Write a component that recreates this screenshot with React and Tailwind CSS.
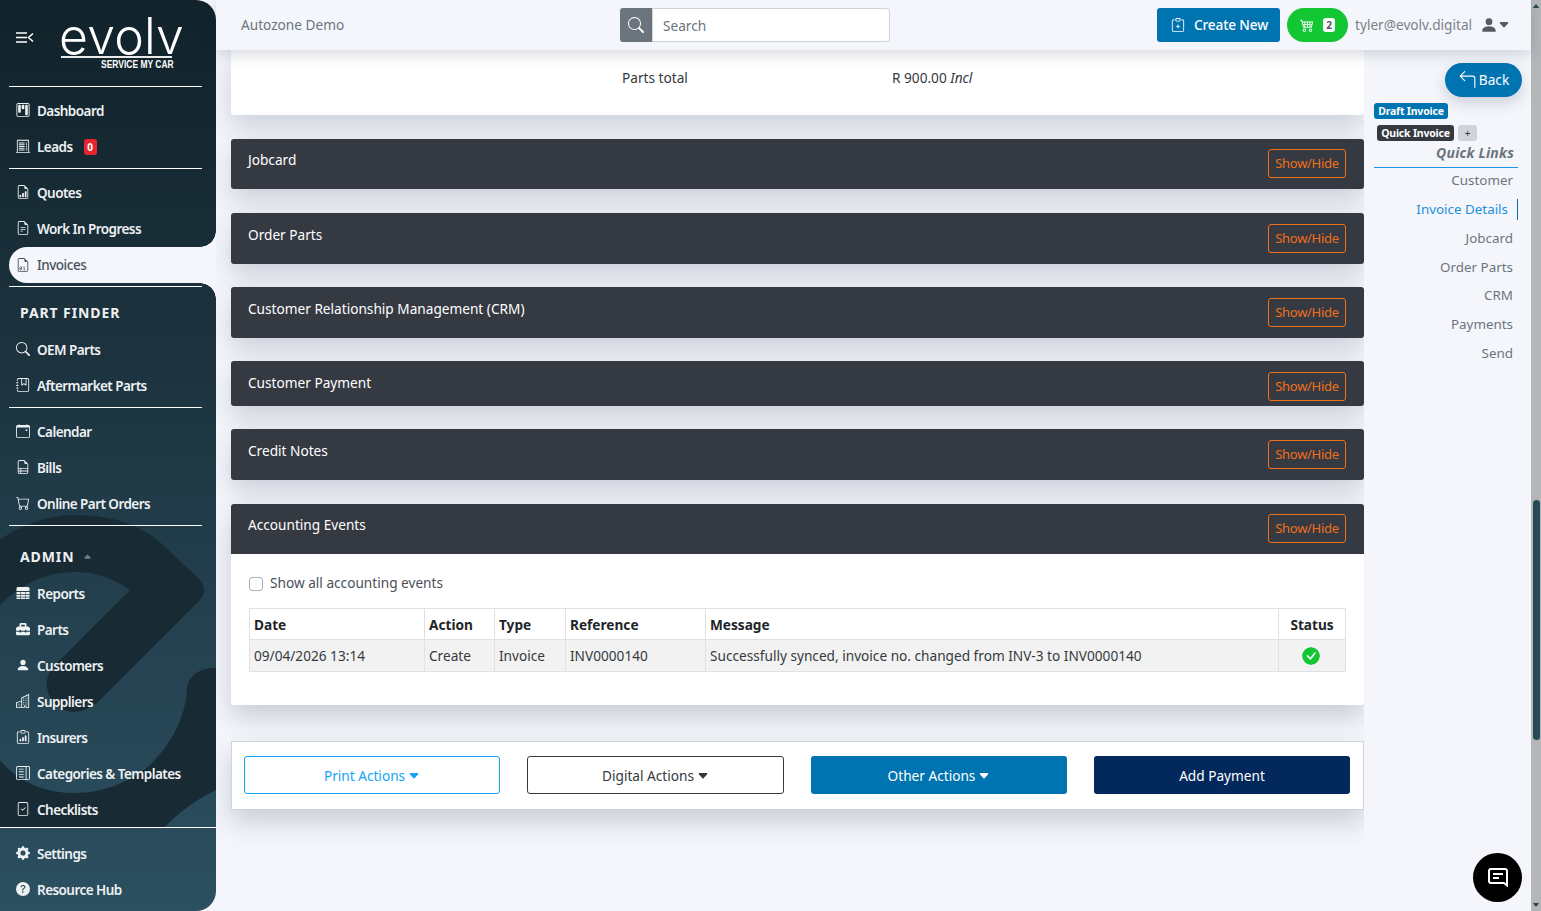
import {
  BsKanban, BsReceiptCutoff, BsFileEarmarkBarGraph, BsFileEarmarkText, BsFileEarmarkBinary, BsSearch,
  BsJournalBookmark, BsCalendarEvent, BsFileEarmarkRuled, BsCart, BsPersonFill, BsBuildings,
  BsClipboardData, BsLayoutTextSidebar, BsFileCheck, BsGearFill, BsQuestionCircleFill, BsClipboardPlus,
  BsCart4, BsArrow90DegLeft, BsCheckCircleFill, BsCaretDownFill, BsCaretUpFill,
} from 'react-icons/bs';
import { FaToolbox } from 'react-icons/fa';

const font = "font-['Noto_Sans',sans-serif]";

const ReportsIcon = ({ className }) => (
  <svg className={className} viewBox="0 0 14 14" fill="currentColor">
    <path d="M2 1h10a1.5 1.5 0 0 1 1.5 1.5V5H.5V2.500A1.500 1.500 0 0 1 2 1z" />
    <path d="M.5 6h4v2h-4zM5 6h4v2H5zM9.500 6h4v2h-4zM.5 8.800h4v2h-4zM5 8.800h4v2H5zM9.500 8.800h4v2h-4zM.5 11.500h4V13H.5zM5 11.500h4V13H5zM9.500 11.500h4V13h-4z" />
  </svg>
);

function NavItem({ icon: Icon, label, badge, active }) {
  if (active) {
    return (
      <div className="relative ml-[9px] flex h-9 items-center rounded-l-full bg-[#f4f6fb] pl-[7px] text-[#4b5259]">
        {/* inverted corners against the dark panel */}
        <span className="absolute -top-4 right-0 h-4 w-4 bg-[radial-gradient(circle_at_0_0,transparent_15.5px,#f4f6fb_16px)]" />
        <span className="absolute -bottom-4 right-0 h-4 w-4 bg-[radial-gradient(circle_at_0_100%,transparent_15.5px,#f4f6fb_16px)]" />
        <Icon className="h-[14px] w-[14px]" />
        <span className="ml-[7px] text-[13.5px] font-medium tracking-[-0.5px]">{label}</span>
      </div>
    );
  }
  return (
    <div className="flex h-9 items-center pl-4 text-[#eef1f3]">
      <Icon className="h-[14px] w-[14px] -translate-y-[1px]" />
      <span className="ml-[7px] text-[13.5px] font-semibold tracking-[-0.55px]">{label}</span>
      {badge && (
        <span className="ml-[11px] flex h-4 w-[13px] items-center justify-center rounded-[3px] bg-[#e8252f] text-[10px] font-bold text-white">
          {badge}
        </span>
      )}
    </div>
  );
}

const Rule = ({ className }) => <div className={`ml-[9px] w-[193px] border-t border-white ${className}`} />;

function Sidebar() {
  return (
    <aside className="relative h-[911px] w-[216px] shrink-0 overflow-hidden rounded-r-[20px] bg-[linear-gradient(180deg,#11222a_0%,#1b313c_35%,#2c5061_100%)]">
      <svg className="absolute left-0 top-0" width="216" height="911" viewBox="0 0 216 911" fill="#182a33">
        <path d="M0 540 C26 522 52 515 75 515 C115 515 145 527 165 547 L200 580 Q208 590 200 600 L100 700 C84 716 60 716 50 697 C43 682 48 670 60 660 L130 590 C110 576 92 572 75 572 C45 572 20 585 0 605 Z" />
        <path d="M0 760 C20 785 50 793 75 793 C105 793 133 780 150 765 C175 740 185 715 187 690 C188 675 200 668 216 668 L216 790 C195 800 178 813 165 827 L0 827 Z" />
      </svg>

      <div className="relative">
        <div className="h-[86px] pt-[29px]">
          <div className="flex items-start">
            <svg className="ml-4 mt-[3px]" width="18" height="11" viewBox="0 0 18 11" fill="none" stroke="#fff" strokeWidth="1.5">
              <path d="M0 1h11M0 5.5h11M0 10h11M17 1.5l-4.5 4 4.5 4" />
            </svg>
            <div className="ml-[27px] w-[121px]">
              <div className="relative h-[27px]">
                <span className="absolute -top-[12px] left-[-2px] font-['Inter',sans-serif] text-[50px] font-[350] leading-[39px] tracking-[0.2px] text-white">evolv</span>
              </div>
              <div className="w-[111px] border-t-2 border-white/90" />
              <div className="ml-[40px] w-[100px] origin-left scale-x-[0.77] whitespace-nowrap font-['Liberation_Sans',sans-serif] text-[11px] font-bold leading-[12px] text-white">SERVICE MY CAR</div>
            </div>
          </div>
        </div>
        <Rule className="mb-[6px]" />
        <NavItem icon={BsKanban} label="Dashboard" />
        <NavItem icon={BsReceiptCutoff} label="Leads" badge="0" />
        <Rule className="mb-[6px] mt-[3px]" />
        <NavItem icon={BsFileEarmarkBarGraph} label="Quotes" />
        <NavItem icon={BsFileEarmarkText} label="Work In Progress" />
        <NavItem icon={BsFileEarmarkBinary} label="Invoices" active />
        <Rule className="mt-[3px]" />
        <div className="flex h-[45px] items-center pl-5 pt-[6px] text-[14px] font-bold tracking-[0.9px] text-[#eef1f3]">PART FINDER</div>
        <NavItem icon={BsSearch} label="OEM Parts" />
        <NavItem icon={BsJournalBookmark} label="Aftermarket Parts" />
        <Rule className="mb-[6px] mt-[3px]" />
        <NavItem icon={BsCalendarEvent} label="Calendar" />
        <NavItem icon={BsFileEarmarkRuled} label="Bills" />
        <NavItem icon={BsCart} label="Online Part Orders" />
        <Rule className="mt-[3px]" />
        <div className="flex h-[50px] items-center pl-5 pt-[11px] text-[14px] font-bold tracking-[0.9px] text-[#eef1f3]">
          ADMIN
          <BsCaretUpFill className="ml-[9px] h-[9px] w-[9px] text-[#6d7f88]" />
        </div>
        <NavItem icon={ReportsIcon} label="Reports" />
        <NavItem icon={FaToolbox} label="Parts" />
        <NavItem icon={BsPersonFill} label="Customers" />
        <NavItem icon={BsBuildings} label="Suppliers" />
        <NavItem icon={BsClipboardData} label="Insurers" />
        <NavItem icon={BsLayoutTextSidebar} label="Categories & Templates" />
        <NavItem icon={BsFileCheck} label="Checklists" />
        <div className="mb-[8px] mt-[-1px] border-t border-white" />
        <NavItem icon={BsGearFill} label="Settings" />
        <NavItem icon={BsQuestionCircleFill} label="Resource Hub" />
      </div>
    </aside>
  );
}

function TopBar() {
  return (
    <header className="flex h-[50px] items-center bg-[#f4f6fb] pl-[25px] text-[13.65px]">
      <span className="w-[379px] shrink-0 text-[#6c757d]">Autozone Demo</span>
      <div className="flex h-[34px] w-[270px] shrink-0">
        <span className="flex w-8 items-center justify-center rounded-l-[3px] bg-[#6c757d]">
          <BsSearch className="h-4 w-4 text-white" />
        </span>
        <div className="flex flex-1 items-center rounded-r-[3px] border border-[#ced4da] bg-white pl-[10px] pt-[2px] text-[#6c757d]">Search</div>
      </div>
      <button className="ml-[267px] flex h-[34px] w-[123px] shrink-0 items-center rounded-[3px] bg-[#0073b1] pl-[14px] font-medium tracking-[-0.15px] text-white">
        <BsClipboardPlus className="mr-[9px] h-[14px] w-[14px]" />
        Create New
      </button>
      <div className="ml-[7px] flex h-[34px] w-[61px] shrink-0 items-center justify-center gap-[9px] rounded-full bg-[#12c634]">
        <BsCart4 className="h-[14px] w-[14px] text-white" />
        <span className="flex h-[14px] w-3 items-center justify-center rounded-[3px] bg-white text-[10px] font-bold text-[#555]">2</span>
      </div>
      <span className="ml-[7px] shrink-0 text-[#7b8289]">tyler@evolv.digital</span>
      <BsPersonFill className="ml-[8px] h-[18px] w-[18px] shrink-0 text-[#555b61]" />
      <BsCaretDownFill className="h-[12px] w-[12px] shrink-0 text-[#555b61]" />
    </header>
  );
}

function ShowHide({ className }) {
  return (
    <button className={`${className} flex h-[29px] w-[78px] items-center justify-center rounded-[3px] border border-[#f0701a] text-[13px] tracking-[-0.3px] text-[#f0701a]`}>Show/Hide</button>
  );
}

function Section({ title, height, gap, btn, label }) {
  return (
    <div className={`${height} ${gap} flex items-start justify-between rounded-[3px] bg-[#343942] pl-[17px] pr-[18px] shadow-[0_12px_26px_rgba(30,40,70,0.18)]`}>
      <span className={`${label} text-[13.65px] leading-[21px] text-white`}>{title}</span>
      <ShowHide className={btn} />
    </div>
  );
}

const sections = [
  { title: 'Jobcard', height: 'h-[50px]', gap: 'mb-[24px]', btn: 'mt-[10px]', label: 'mt-[10px]' },
  { title: 'Order Parts', height: 'h-[51px]', gap: 'mb-[23px]', btn: 'mt-[11px]', label: 'mt-[11px]' },
  { title: 'Customer Relationship Management (CRM)', height: 'h-[51px]', gap: 'mb-[23px]', btn: 'mt-[11px]', label: 'mt-[11px]' },
  { title: 'Customer Payment', height: 'h-[45px]', gap: 'mb-[23px]', btn: 'mt-[11px]', label: 'mt-[11px]' },
  { title: 'Credit Notes', height: 'h-[51px]', gap: 'mb-[24px]', btn: 'mt-[11px]', label: 'mt-[11px]' },
];

const th = 'border border-[#dee2e6] px-[4px] pt-[2px] text-left text-[13.65px] font-bold text-[#212529]';
const td = 'border border-[#dee2e6] px-[4px] pt-px text-[13.65px] text-[#343a40]';

function Content() {
  return (
    <div className="w-[1148px] shrink-0 overflow-hidden pb-10 pl-[15px]">
      <div className="mb-[24px] flex h-[65px] rounded-b-[3px] bg-white text-[13.65px] text-[#343a40] shadow-[0_12px_26px_rgba(30,40,70,0.18)]">
        <span className="ml-[391px] mt-[18px] w-[270px]">Parts total</span>
        <span className="mt-[18px]">R 900.00 <em>Incl</em></span>
      </div>

      {sections.map((s) => <Section key={s.title} {...s} />)}

      <div className="mb-[36px] h-[201px] rounded-[3px] bg-white shadow-[0_12px_26px_rgba(30,40,70,0.2)]">
        <div className="flex h-[50px] items-start justify-between rounded-t-[3px] bg-[#343942] pl-[17px] pr-[18px]">
          <span className="mt-[10px] text-[13.65px] leading-[21px] text-white">Accounting Events</span>
          <ShowHide className="mt-[10px]" />
        </div>
        <label className="ml-[18px] mt-[20px] flex h-[19px] items-center text-[13.65px] text-[#495057]">
          <span className="h-[14px] w-[14px] rounded-[3px] border border-[#a9b0b8] bg-white" />
          <span className="ml-[7px]">Show all accounting events</span>
        </label>
        <div className="px-[18px] pt-[15px]">
          <table className="w-[1096px] table-fixed border-collapse">
            <thead>
              <tr className="h-[31px]">
                <th className={`${th} w-[175px]`}>Date</th>
                <th className={`${th} w-[70px]`}>Action</th>
                <th className={`${th} w-[71px]`}>Type</th>
                <th className={`${th} w-[140px]`}>Reference</th>
                <th className={`${th} w-[573px]`}>Message</th>
                <th className={`${th} w-[67px] !text-center`}>Status</th>
              </tr>
            </thead>
            <tbody>
              <tr className="h-[32px] bg-[#f2f2f2]">
                <td className={td}>09/04/2026 13:14</td>
                <td className={td}>Create</td>
                <td className={td}>Invoice</td>
                <td className={td}>INV0000140</td>
                <td className={td}>Successfully synced, invoice no. changed from INV-3 to INV0000140</td>
                <td className={td}>
                  <BsCheckCircleFill className="mx-auto h-[18px] w-[18px] -translate-x-px rounded-full text-[#12c634]" />
                </td>
              </tr>
            </tbody>
          </table>
        </div>
      </div>

      <div className="flex h-[69px] items-start gap-[27px] border border-[#ced4da] bg-white pl-[12px] pt-[14px] text-[13.65px] shadow-[0_12px_26px_rgba(30,40,70,0.2)]">
        <button className="flex h-[38px] w-[256px] items-center justify-center gap-[3px] rounded-[3px] border border-[#14a4f5] pt-[2px] text-[#14a4f5]">
          Print Actions <BsCaretDownFill className="h-[12px] w-[12px]" />
        </button>
        <button className="flex h-[38px] w-[257px] items-center justify-center gap-[3px] rounded-[3px] border border-[#343a40] pt-[2px] text-[#343a40]">
          Digital Actions <BsCaretDownFill className="h-[12px] w-[12px]" />
        </button>
        <button className="flex h-[38px] w-[256px] items-center justify-center gap-[3px] rounded-[3px] bg-[#0073b1] pt-[2px] text-white">
          Other Actions <BsCaretDownFill className="h-[12px] w-[12px]" />
        </button>
        <button className="h-[38px] w-[256px] rounded-[3px] bg-[#03285c] pt-[2px] text-white">Add Payment</button>
      </div>
    </div>
  );
}

const quickLinks = ['Customer', 'Invoice Details', 'Jobcard', 'Order Parts', 'CRM', 'Payments', 'Send'];

function QuickLinks() {
  return (
    <div className="w-[167px] shrink-0 pl-[10px] pt-[13px]">
      <div className="flex justify-end pr-[9px]">
        <button className="flex h-[34px] w-[77px] items-center justify-center gap-[2px] rounded-full bg-[#0073b1] text-[13.65px] text-white shadow-[0_6px_14px_rgba(30,40,70,0.18)]">
          <BsArrow90DegLeft className="h-[18px] w-[19px]" />
          Back
        </button>
      </div>
      <div className="mt-[6px] flex">
        <span className="flex h-[16px] w-[74px] items-center justify-center rounded-[3px] bg-[#0073b1] pt-px text-[10.5px] font-bold tracking-[-0.2px] text-white">Draft Invoice</span>
      </div>
      <div className="mt-[6px] flex items-center pl-[3px]">
        <span className="flex h-[16px] w-[77px] items-center justify-center rounded-[3px] bg-[#343a40] pt-px text-[10.5px] font-bold tracking-[-0.2px] text-white">Quick Invoice</span>
        <span className="ml-[4px] flex h-[16px] w-[19px] items-center justify-center rounded-[3px] bg-[#ced4da] text-[10px] text-[#343a40]">+</span>
      </div>
      <div className="mr-[17px] mt-[2px] text-right text-[14px] font-bold italic leading-[19px] tracking-[0.2px] text-[#6c757d]">Quick Links</div>
      <div className="mr-[13px] mt-[5px] border-t border-[#1c93e3]" />
      <ul className="mr-[13px] pt-[2px] text-right text-[13.4px] leading-[21px]">
        {quickLinks.map((l) => (
          <li
            key={l}
            className={l === 'Invoice Details'
              ? 'mb-[8px] h-[21px] border-r border-[#0073b1] pr-[9px] text-[#1c8fdc]'
              : 'mb-[7.8px] h-[21px] pr-[5px] text-[#6c757d]'}
          >
            {l}
          </li>
        ))}
      </ul>
    </div>
  );
}

function Scrollbar() {
  return (
    <div className="flex h-[911px] w-[10px] shrink-0 flex-col items-center bg-[#b5b6b8]">
      <BsCaretUpFill className="mt-[2px] h-[8px] w-[8px] text-[#264a57]" />
      <div className="mt-[490px] h-[240px] w-[7px] rounded-full bg-[#264a57]" />
      <div className="flex-1" />
      <BsCaretDownFill className="mb-[2px] h-[8px] w-[8px] text-[#264a57]" />
    </div>
  );
}

export default function App() {
  return (
    <div className={`${font} relative flex h-[911px] overflow-hidden bg-[#f4f6fb]`}>
      <Sidebar />
      <div className="min-w-0 flex-1">
        <div className="relative z-10 shadow-[0_4px_14px_rgba(30,40,70,0.18)]"><TopBar /></div>
        <div className="flex">
          <Content />
          <QuickLinks />
        </div>
      </div>
      <Scrollbar />

      {/* floating chat button */}
      <button className="absolute bottom-[9px] right-[19px] flex h-[49px] w-[49px] items-center justify-center rounded-full bg-black">
        <svg width="20" height="19" viewBox="0 0 20 19" fill="none" stroke="#fff" strokeWidth="2">
          <path d="M3 1h14a2 2 0 0 1 2 2v14.5l-3-2.5H3a2 2 0 0 1-2-2V3a2 2 0 0 1 2-2z" />
          <path d="M5 6h10M5 10h6" />
        </svg>
      </button>
    </div>
  );
}
